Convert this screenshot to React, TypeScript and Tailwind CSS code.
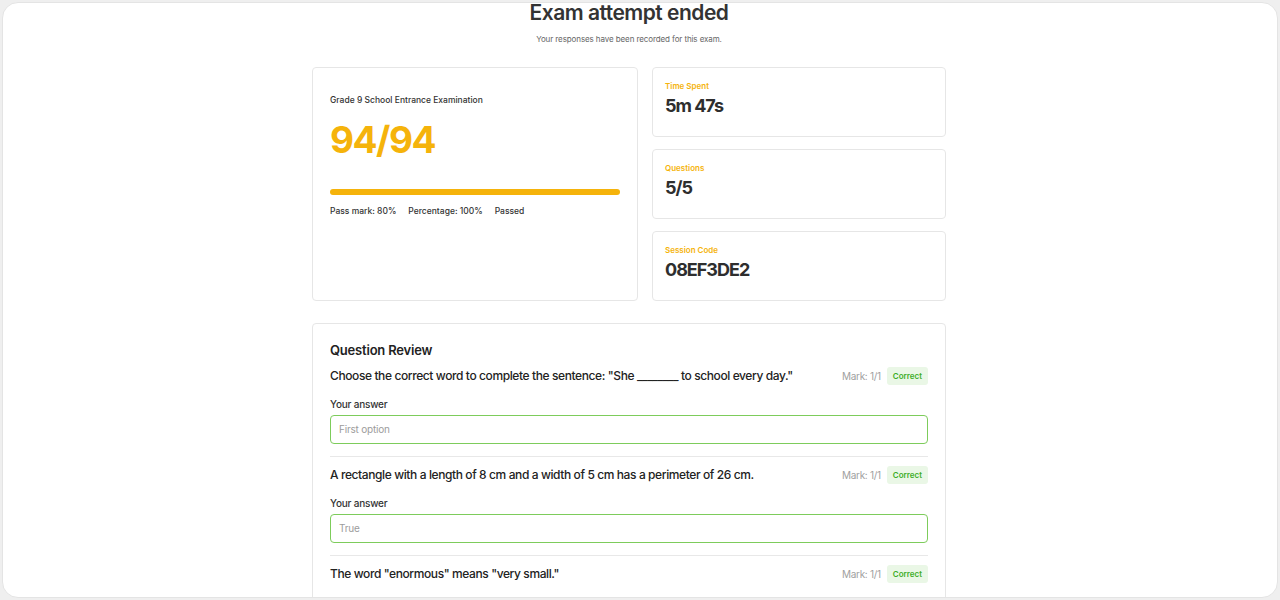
import React from 'react';

const QUESTIONS = [
    { text: 'Choose the correct word to complete the sentence: "She ________ to school every day."', answer: 'First option' },
    { text: 'A rectangle with a length of 8 cm and a width of 5 cm has a perimeter of 26 cm.', answer: 'True' },
    { text: 'The word "enormous" means "very small."', answer: 'False' },
];

const StatCard: React.FC<{ label: string; value: string }> = ({ label, value }) => (
    <div className="h-[70px] rounded-[4px] border border-[#e6e6e6] px-[12px] pt-[13px]">
        <div className="text-[8px] font-semibold leading-[10px] text-[#f5b30b]">{label}</div>
        <div className="mt-[4px] text-[18px] font-bold leading-[22px] tracking-[-1px] text-[#2e2e2e]">{value}</div>
    </div>
);

const QuestionItem: React.FC<{ text: string; answer: string; first?: boolean }> = ({ text, answer, first }) => (
    <div className={first ? '' : 'border-t border-[#e8e8e8] pt-[9px] mt-[12px]'}>
        <div className="flex items-center justify-between">
            <div className="text-[12px] font-medium leading-[18px] text-[#222] tracking-[-0.4px]">{text}</div>
            <div className="flex items-center gap-[6px]">
                <span className="text-[10px] text-[#a0a0a0] tracking-[-0.3px]">Mark: 1/1</span>
                <span className="rounded-[3px] bg-[#eaf7e6] px-[6px] py-[4px] text-[8px] font-semibold leading-[10px] text-[#3fae29]">Correct</span>
            </div>
        </div>
        <div className="mt-[13px] text-[10px] font-medium leading-[12px] tracking-[-0.2px] text-[#333]">Your answer</div>
        <div className="mt-[5px] flex h-[29px] items-center rounded-[4px] border-[1.5px] border-[#7dcc5b] px-[8px] text-[10px] tracking-[-0.2px] text-[#9c9c9c]">
            {answer}
        </div>
    </div>
);

export default function App() {
    return (
        <div className="h-[600px] bg-[#efefef] p-[2px]" style={{ fontFamily: 'Inter, "Noto Sans", sans-serif' }}>
            <div className="h-[596px] overflow-hidden rounded-[16px] border border-[#e4e4e4] bg-white">
                <div className="pr-[22px]">
                    <div className="-mt-[3px] flex flex-col items-center">
                        <h1 className="text-[21px] font-semibold leading-[26px] tracking-[-0.5px] text-[#333]">Exam attempt ended</h1>
                        <p className="mt-[7px] text-[8px] leading-[12px] text-[#666] tracking-[-0.1px]">Your responses have been recorded for this exam.</p>
                    </div>

                    <div className="mx-auto mt-[22px] w-[634px]">
                        <div className="flex gap-[14px]">
                            <div className="h-[234px] w-[326px] rounded-[4px] border border-[#e6e6e6] px-[17px] pt-[26px]">
                                <div className="text-[8.5px] font-medium leading-[12px] text-[#333]">Grade 9 School Entrance Examination</div>
                                <div className="mt-[12px] text-[37px] font-bold leading-[44px] tracking-[-1.5px] text-[#f5b30b]">94/94</div>
                                <div className="mt-[27px] h-[6px] w-full rounded-full bg-[#f5b30b]" />
                                <div className="mt-[10px] flex gap-[12px] text-[8.5px] font-medium leading-[12px] text-[#333]">
                                    <span>Pass mark: 80%</span>
                                    <span>Percentage: 100%</span>
                                    <span>Passed</span>
                                </div>
                            </div>
                            <div className="flex w-[294px] flex-col gap-[12px]">
                                <StatCard label="Time Spent" value="5m 47s" />
                                <StatCard label="Questions" value="5/5" />
                                <StatCard label="Session Code" value="08EF3DE2" />
                            </div>
                        </div>

                        <div className="mt-[22px] rounded-[4px] border border-[#e6e6e6] px-[17px] pt-[17px] pb-[20px]">
                            <h2 className="text-[13px] font-semibold leading-[18px] tracking-[-0.2px] text-[#222]">Question Review</h2>
                            <div className="mt-[8px]">
                                {QUESTIONS.map((q, i) => (
                                    <QuestionItem key={i} text={q.text} answer={q.answer} first={i === 0} />
                                ))}
                            </div>
                        </div>
                    </div>
                </div>
            </div>
        </div>
    );
}
